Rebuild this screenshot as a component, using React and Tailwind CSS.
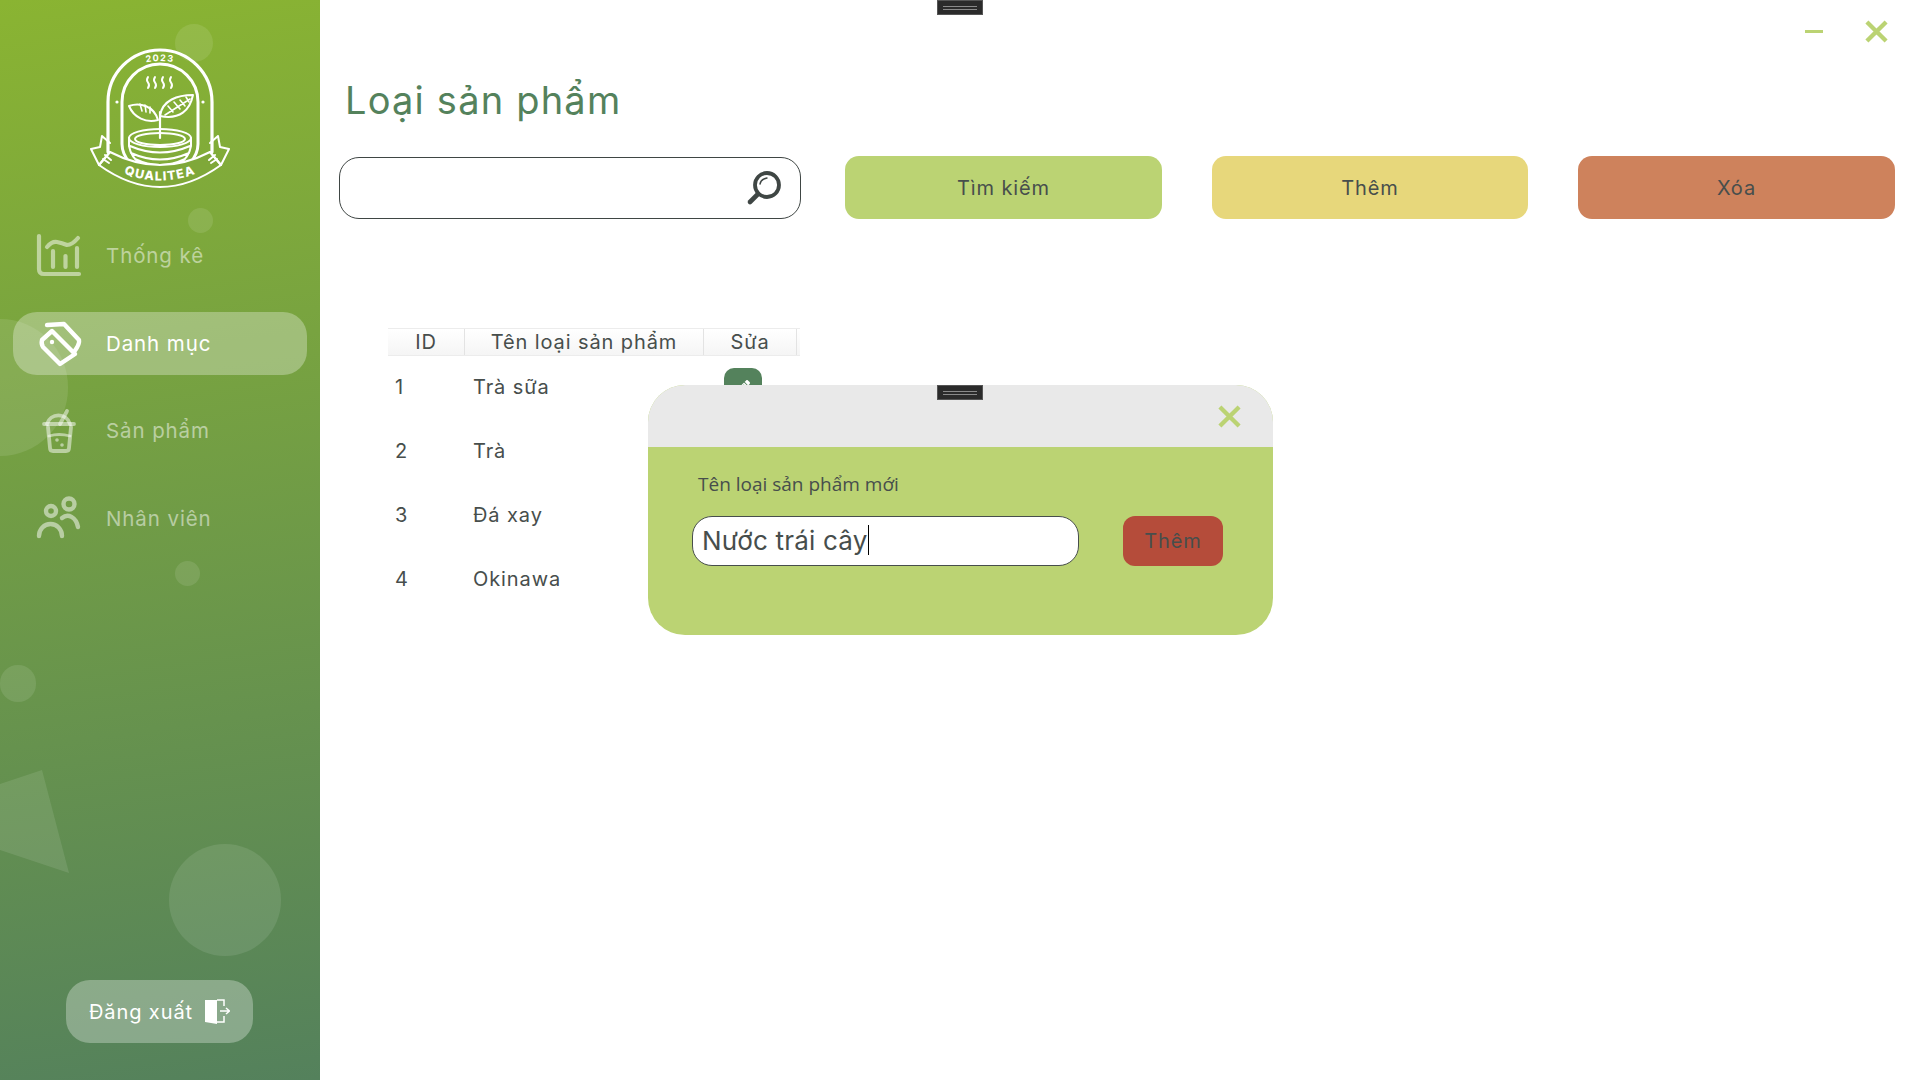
import React from "react";
import { FaPencilAlt } from "react-icons/fa";

const rows = [
  { id: 1, name: "Trà sữa" },
  { id: 2, name: "Trà" },
  { id: 3, name: "Đá xay" },
  { id: 4, name: "Okinawa" },
];

const Logo = () => (
  <svg viewBox="0 0 160 160" className="w-[160px] h-[160px]" fill="none" stroke="#fff" strokeWidth="2" strokeLinecap="round" strokeLinejoin="round">
    {/* arch */}
    <path d="M28 112V62a52 52 0 0 1 104 0v50" strokeWidth="3.2" />
    <path d="M42 104V62a38 38 0 0 1 76 0v42q0 10-8 19M42 104q0 10 8 19" strokeWidth="3" />
    <circle cx="37" cy="62" r="1.6" fill="#fff" stroke="none" />
    <circle cx="123" cy="62" r="1.6" fill="#fff" stroke="none" />
    <path id="yr" d="M58 24Q80 18 102 24" stroke="none" />
    <text fill="#fff" stroke="none" fontSize="9" fontWeight="700" fontFamily="Inter, sans-serif" letterSpacing="1.2" textAnchor="middle">
      <textPath href="#yr" startOffset="50%">2023</textPath>
    </text>
    {/* steam */}
    <path d="M68 37q-2 3 0 5.500t0 5.500M75 37q-2 3 0 5.500t0 5.500M83 37q-2 3 0 5.500t0 5.500M91 37q-2 3 0 5.500t0 5.500" />
    {/* leaves */}
    <path d="M80 98V72" strokeWidth="2.2" />
    <path d="M80 76C82 60 98 55 113 55C110 70 100 80 80 76Z" />
    <path d="M85 75L110 59M88 66L93 72M94 62L100 69M100 60L105 66M106 57L109 62" strokeWidth="1.600" />
    <path d="M78 80C66 83 54 78 49 66C60 62 74 66 78 80Z" />
    <path d="M60 64L62 71M65 65L66 72M70 67L70 73" strokeWidth="1.600" />
    {/* bowl */}
    <ellipse cx="80" cy="98" rx="31" ry="9" />
    <ellipse cx="80" cy="99" rx="25" ry="6" />
    <path d="M49 98v8q2 12 13 19M111 98v8q-2 12-13 19M50 106q30 13 60 0M51 113q29 13 58 0M55 119q25 12 50 0" />
    {/* ribbon */}
    <path d="M19 125Q80 169 141 125L130 112Q80 138 30 112Z" fill="#7fa839" />
    <path d="M30 112L19 125L11 109L20 107L22 96L30 103M130 112L141 125L149 109L140 107L138 96L130 103" />
    <path d="M25 115l6 5M23 119l6 4M135 115l-6 5M137 119l-6 4" />
    <path id="rb" d="M22 123Q80 158 138 123" stroke="none" />
    <text fill="#fff" stroke="none" fontSize="12.500" fontWeight="800" fontFamily="Inter, sans-serif" letterSpacing="1.2" textAnchor="middle">
      <textPath href="#rb" startOffset="50%">QUALITEA</textPath>
    </text>
  </svg>
);

const ChartIcon = () => (
  <svg viewBox="0 0 48 48" className="w-12 h-12" fill="none" stroke="currentColor" strokeWidth="4.200" strokeLinecap="round" strokeLinejoin="round">
    <path d="M3 4V37q0 5 5 5H43" />
    <path d="M11 15q5-6 10-5t10 3q5 0 11-7" />
    <path d="M17 19V35M41 16V35" />
    <path d="M29.500 24V35" />
  </svg>
);

const TagsIcon = () => (
  <svg viewBox="0 0 48 48" className="w-12 h-12" fill="none" stroke="currentColor" strokeWidth="4.400" strokeLinecap="round" strokeLinejoin="round">
    <path d="M6 21L16 12L39 35L24 45L7 28Q5 25 6 21Z" />
    <path d="M11 6L28 5L43 21Q44 25 38 33" />
    <circle cx="16" cy="23" r="2.200" fill="currentColor" stroke="none" />
  </svg>
);

const CupIcon = () => (
  <svg viewBox="0 0 48 48" className="w-12 h-12" fill="none" stroke="currentColor" strokeWidth="3.800" strokeLinecap="round" strokeLinejoin="round">
    <path d="M8 17H38" />
    <path d="M11 17a12 12 0 0 1 23 0" />
    <path d="M24 17L31 4" />
    <path d="M12 20L14 41q0 3 3 3H30q3 0 3-3L35 20" />
    <path d="M13 29q10-3 21 0" strokeWidth="2.800" />
    <circle cx="21" cy="33" r="1.800" fill="currentColor" stroke="none" />
    <circle cx="26" cy="38" r="1.800" fill="currentColor" stroke="none" />
  </svg>
);

const PeopleIcon = () => (
  <svg viewBox="0 0 48 48" className="w-12 h-12" fill="none" stroke="currentColor" strokeWidth="4.400" strokeLinecap="round">
    <circle cx="15" cy="17" r="5" />
    <circle cx="33" cy="10" r="5.500" />
    <path d="M3 42a11.500 12 0 0 1 23 0" />
    <path d="M26 24c6-5 14-1 16 9" />
  </svg>
);

const LogoutIcon = () => (
  <svg viewBox="0 0 26 26" className="w-[26px] h-[26px]" fill="none">
    <path d="M1 1H13V25L1 23Z" fill="#fff" />
    <path d="M13 1H20V7M20 17V23H13" stroke="#fff" strokeWidth="1.500" />
    <path d="M16 12H25M22 9L25.500 12L22 15" stroke="#fff" strokeWidth="1.500" />
  </svg>
);

const SearchIcon = () => (
  <svg viewBox="0 0 36 36" className="w-9 h-9" fill="none" stroke="#3f4644" strokeLinecap="round">
    <circle cx="21" cy="15" r="12" strokeWidth="3.800" />
    <path d="M12 24L4 32" strokeWidth="4.600" />
    <path d="M14 14q1-5 7-6" strokeWidth="1.400" />
  </svg>
);

const CloseX = ({ className }) => (
  <svg viewBox="0 0 24 24" className={className} fill="none" stroke="#bbd373" strokeWidth="4.500">
    <path d="M2 2L22 22M22 2L2 22" />
  </svg>
);

const DragBar = ({ className }) => (
  <div className={`absolute w-[46px] h-[15px] bg-[#2b2b2b] border border-[#555] flex flex-col justify-center gap-[2px] px-[5px] ${className}`}>
    <div className="h-px bg-[#8a8a8a]" />
    <div className="h-px bg-[#8a8a8a]" />
  </div>
);

const NavItem = ({ icon, label, active }) => (
  <div className={`h-[63px] mx-[13px] w-[294px] rounded-[24px] flex items-center gap-[22px] pl-[23px] text-[20.500px] tracking-[0.9px] ${active ? "bg-white/30 text-white" : "text-white/50"}`}>
    {icon}
    <span className="mt-[2px]">{label}</span>
  </div>
);

const App = () => {
  return (
    <div className="flex w-full h-screen bg-white overflow-hidden font-['Inter',sans-serif] text-[#474e4c] tracking-[0.9px]">
      {/* Sidebar */}
      <aside className="relative w-[320px] shrink-0 h-full flex flex-col overflow-hidden bg-[linear-gradient(172deg,#8ab432_0%,#54815c_100%)]">
        {/* background shapes */}
        <div className="absolute left-[175px] top-[24px] w-[38px] h-[38px] rounded-full bg-white/10" />
        <div className="absolute left-[188px] top-[208px] w-[25px] h-[25px] rounded-full bg-white/10" />
        <div className="absolute left-[-68px] top-[319px] w-[136px] h-[137px] rounded-full bg-white/10" />
        <div className="absolute left-[175px] top-[561px] w-[25px] h-[25px] rounded-full bg-white/10" />
        <div className="absolute left-0 top-[665px] w-[36px] h-[37px] rounded-full bg-white/10" />
        <div className="absolute left-[169px] top-[844px] w-[112px] h-[112px] rounded-full bg-white/10" />
        <svg className="absolute left-0 top-[765px] w-[72px] h-[110px]" viewBox="0 0 72 110">
          <path d="M0 19L42 5L69 108L0 85Z" fill="#fff" fillOpacity="0.1" />
        </svg>

        <div className="relative flex justify-center pt-[40px] mb-[24px]">
          <Logo />
        </div>
        <nav className="relative flex flex-col gap-[24.500px]">
          <NavItem icon={<ChartIcon />} label="Thống kê" />
          <NavItem icon={<TagsIcon />} label="Danh mục" active />
          <NavItem icon={<CupIcon />} label="Sản phẩm" />
          <NavItem icon={<PeopleIcon />} label="Nhân viên" />
        </nav>
        <div className="relative mt-auto mb-[37px] ml-[66px] w-[187px] h-[63px] rounded-[24px] bg-white/30 text-white text-[20px] flex items-center justify-center gap-[11px]">
          <span>Đăng xuất</span>
          <LogoutIcon />
        </div>
      </aside>

      {/* Main */}
      <main className="relative flex-1 h-full flex flex-col">
        <DragBar className="left-[617px] top-0" />
        <div className="absolute left-[1485px] top-[30px] w-[18px] h-[3px] bg-[#bbd373]" />
        <CloseX className="absolute left-[1545px] top-[20px] w-[23px] h-[23px]" />

        <h1 className="mt-[78px] ml-[25px] text-[38px] leading-[44px] text-[#54825c] tracking-[1.200px]">Loại sản phẩm</h1>

        <div className="mt-[34px] ml-[19px] flex items-center text-[20px]">
          <div className="w-[462px] h-[62px] rounded-[20px] border border-[#3f4644] flex items-center justify-end pr-[18px]">
            <SearchIcon />
          </div>
          <button className="ml-[44px] w-[317px] h-[63px] rounded-[14px] bg-[#bbd373]">Tìm kiếm</button>
          <button className="ml-[50px] w-[316px] h-[63px] rounded-[14px] bg-[#e7d77b]">Thêm</button>
          <button className="ml-[50px] w-[317px] h-[63px] rounded-[14px] bg-[#ce825c]">Xóa</button>
        </div>

        {/* Table */}
        <div className="mt-[109px] ml-[68px] w-[412px] text-[20px]">
          <div className="flex h-[28px] border-y border-[#ececec] bg-[linear-gradient(#ffffff,#f5f5f5)] leading-[26px] text-center">
            <div className="w-[77px] border-r border-[#e3e3e3]">ID</div>
            <div className="w-[239px] border-r border-[#e3e3e3]">Tên loại sản phẩm</div>
            <div className="w-[93px] border-r border-[#e3e3e3]">Sửa</div>
          </div>
          {rows.map((row) => (
            <div key={row.id} className="flex items-center h-[64px] mt-[-1px] mb-px">
              <div className="w-[85px] pl-[7px]">{row.id}</div>
              <div className="w-[251px]">{row.name}</div>
              <button className="w-[38px] h-[38px] rounded-[10px] bg-[#54825c] flex items-center justify-center text-white">
                <FaPencilAlt size={14} />
              </button>
            </div>
          ))}
        </div>

        {/* Dialog */}
        <div className="absolute left-[328px] top-[385px] w-[625px] h-[250px] rounded-[37px] overflow-hidden bg-[#bbd373] flex flex-col">
          <DragBar className="left-[289px] top-0" />
          <div className="h-[62px] bg-[#e9e9e9] flex justify-end items-center pr-[32px] shrink-0">
            <CloseX className="w-[23px] h-[23px]" />
          </div>
          <p className="mt-[25px] ml-[50px] text-[19px] leading-[24px] font-['Open_Sans',sans-serif] tracking-normal">Tên loại sản phẩm mới</p>
          <div className="mt-[20px] ml-[44px] flex items-center">
            <div className="w-[387px] h-[50px] rounded-[20px] bg-white border border-[#474e4c] flex items-center pl-[9px] pb-[2px] text-[26px] tracking-[0.2px]">
              <span>Nước trái cây</span>
              <span className="w-px h-[30px] bg-black" />
            </div>
            <button className="ml-[44px] w-[100px] h-[50px] rounded-[12px] bg-[#b54c3a] text-[20px]">Thêm</button>
          </div>
        </div>
      </main>
    </div>
  );
};

export default App;
